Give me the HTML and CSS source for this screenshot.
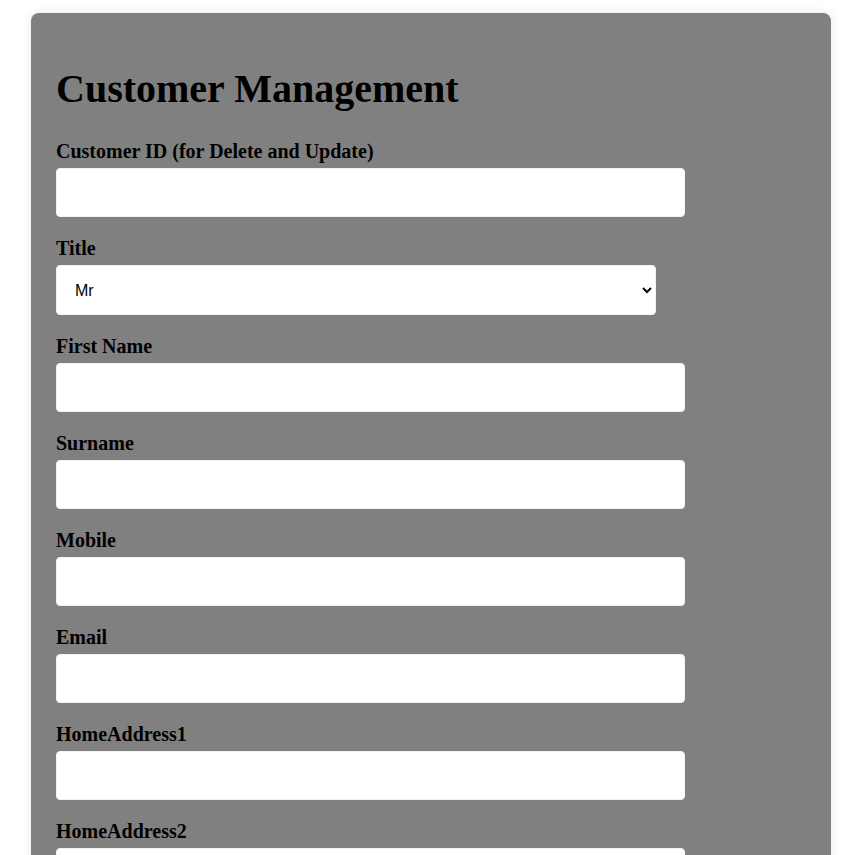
FILE: index.html
```html
<!DOCTYPE html>
<html lang="en">
<head>
<meta charset="utf-8">
<title>Customer Management</title>
<link rel="stylesheet" href="styles.css">
</head>
<body>
<div class="container">
  <h1 class="title">Customer Management</h1>
  <form class="form">
    <div class="field">
      <label for="cid">Customer ID (for Delete and Update)</label>
      <input type="text" id="cid">
    </div>
    <div class="field">
      <label for="ctitle">Title</label>
      <select id="ctitle">
        <option>Mr</option>
        <option>Ms</option>
        <option>Mrs</option>
        <option>Miss</option>
        <option>Other</option>
      </select>
    </div>
    <div class="field">
      <label for="fname">First Name</label>
      <input type="text" id="fname">
    </div>
    <div class="field">
      <label for="sname">Surname</label>
      <input type="text" id="sname">
    </div>
    <div class="field">
      <label for="mobile">Mobile</label>
      <input type="text" id="mobile">
    </div>
    <div class="field">
      <label for="email">Email</label>
      <input type="text" id="email">
    </div>
    <div class="field">
      <label for="ha1">HomeAddress1</label>
      <input type="text" id="ha1">
    </div>
    <div class="field">
      <label for="ha2">HomeAddress2</label>
      <input type="text" id="ha2">
    </div>
    <div class="field">
      <label for="town">Town</label>
      <input type="text" id="town">
    </div>
    <div class="field">
      <label for="county">CountyCity</label>
      <input type="text" id="county">
    </div>
    <div class="field">
      <label for="eircode">EIRCODE</label>
      <input type="text" id="eircode">
    </div>
  </form>
</div>
</body>
</html>
```
FILE: styles.css
```css
html, body {
  margin: 0;
  padding: 0;
  background: #ffffff;
}

body {
  font-family: "Liberation Serif", "Times New Roman", serif;
  color: #000;
}

.container {
  box-sizing: border-box;
  width: 800px;
  margin: 13px 0 0 31px;
  padding: 27px 25px 25px;
  background: #808080;
  border-radius: 8px;
  box-shadow: 0 0 10px rgba(0, 0, 0, 0.1);
}

.title {
  font-size: 40px;
  font-weight: bold;
  margin: 25px 0 28px;
}

.field {
  margin-bottom: 20px;
}

.field label {
  display: block;
  font-size: 20px;
  font-weight: bold;
  margin-bottom: 5px;
}

.field input {
  box-sizing: border-box;
  width: 629px;
  height: 49px;
  padding: 14px;
  border: 1px solid #f2f2f2;
  border-radius: 4px;
  font-family: "Liberation Sans", Arial, sans-serif;
  font-size: 16px;
  background: #fff;
}

.field select {
  box-sizing: border-box;
  width: 600px;
  height: 50px;
  padding: 14px;
  border: 1px solid #f2f2f2;
  border-radius: 4px;
  font-family: "Liberation Sans", Arial, sans-serif;
  font-size: 16px;
  color: #000;
  background: #fff;
}
```
